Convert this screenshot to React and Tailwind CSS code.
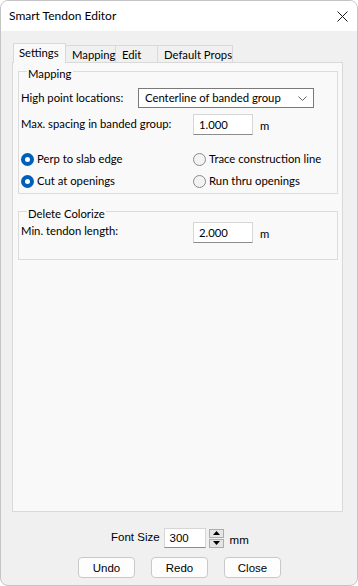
import React from 'react';

const font = { fontFamily: 'Lato, "Noto Sans", sans-serif' };
const smallFont = { fontFamily: '"Liberation Sans", Arial, sans-serif', fontSize: '11.5px' };

const Radio = ({ checked, label }) => (
  <div className="flex items-center h-[20px]">
    {checked ? (
      <span className="w-[13px] h-[13px] rounded-full bg-[#005fb8] flex items-center justify-center">
        <span className="w-[5px] h-[5px] rounded-full bg-white" />
      </span>
    ) : (
      <span className="w-[13px] h-[13px] rounded-full border border-[#8a8a8a] bg-[#f3f3f3]" />
    )}
    <span className="ml-[3px]">{label}</span>
  </div>
);

const TextBox = ({ value, className = '' }) => (
  <div
    className={`h-[21px] bg-white border border-[#d6d6d6] border-b-[#8c8c8c] flex items-center pl-[5px] ${className}`}
  >
    {value}
  </div>
);

const Tab = ({ label, width, selected }) =>
  selected ? (
    <div
      className="h-[20px] bg-[#f9f9f9] border border-b-0 border-[#d9d9d9] flex items-start pt-[1px] pl-[5px] relative z-10 -mb-px"
      style={{ width }}
    >
      {label}
    </div>
  ) : (
    <div
      className="h-[17px] self-end bg-[#f0f0f0] border-t border-r border-[#d9d9d9] flex items-center pl-[6px] pt-[1px]"
      style={{ width }}
    >
      {label}
    </div>
  );

export default function App() {
  return (
    <div
      className="w-[358px] h-[586px] flex flex-col border border-[#c4c4c4] rounded-[8px] overflow-hidden bg-[#f0f0f0] text-[11.3px] text-black leading-[16px] whitespace-nowrap"
      style={font}
    >
      <div className="h-[30px] bg-white flex items-center justify-between pl-[8px] pr-[9px]">
        <span className="text-[12px]">Smart Tendon Editor</span>
        <svg width="11" height="11" viewBox="0 0 11 11">
          <path d="M0.5 0.5 L10.5 10.5 M10.5 0.5 L0.5 10.5" stroke="#1a1a1a" strokeWidth="1" />
        </svg>
      </div>

      <div className="flex-1 flex flex-col pl-[11px]">
        <div className="flex mt-[12px] ml-[1px] h-[19px] items-end">
          <Tab label="Settings" width={53} selected />
          <Tab label="Mapping" width={50} />
          <Tab label="Edit" width={42} />
          <Tab label="Default Props" width={75} />
        </div>

        <div className="w-[331px] h-[450px] bg-[#f9f9f9] border border-[#d9d9d9] flex flex-col pl-[5px]">
          <fieldset className="w-[320px] mt-[-3px] border border-[#dcdcdc] px-[2px] pb-[2px]">
            <legend className="ml-[6px] px-[1px] pt-[6px] leading-[16px]">Mapping</legend>
            <div className="flex items-center h-[20px] mt-[6px]">
              <span className="w-[117px]">High point locations:</span>
              <div className="w-[176px] h-[20px] bg-white border border-[#7a7a7a] flex items-center justify-between pl-[6px] pr-[6px]">
                <span>Centerline of banded group</span>
                <svg width="9" height="5" viewBox="0 0 9 5">
                  <path d="M0.5 0.5 L4.5 4.5 L8.5 0.5" stroke="#606060" strokeWidth="1" fill="none" />
                </svg>
              </div>
            </div>
            <div className="flex items-center h-[21px] mt-[6px]">
              <span className="w-[172px] -mt-[2px]">Max. spacing in banded group:</span>
              <TextBox value="1.000" className="w-[60px]" />
              <span className="ml-[7px] mt-[3px]">m</span>
            </div>
            <div className="grid grid-cols-[172px_1fr] mt-[14px]">
              <Radio checked label="Perp to slab edge" />
              <Radio label="Trace construction line" />
            </div>
            <div className="grid grid-cols-[172px_1fr] mt-[2px]">
              <Radio checked label="Cut at openings" />
              <Radio label="Run thru openings" />
            </div>
          </fieldset>

          <fieldset className="w-[320px] mt-[6px] border border-[#dcdcdc] px-[2px] pb-[16px]">
            <legend className="ml-[6px] px-[1px] pt-[6px] leading-[16px]">Delete Colorize</legend>
            <div className="flex items-center h-[21px] mt-[0px]">
              <span className="w-[172px] -mt-[4px]">Min. tendon length:</span>
              <TextBox value="2.000" className="w-[60px]" />
              <span className="ml-[7px] mt-[3px]">m</span>
            </div>
          </fieldset>
        </div>

        <div className="flex items-center mt-[16px] h-[20px] pl-[99px]" style={smallFont}>
          <span className="mr-[4px] -mt-[3px]">Font Size</span>
          <div className="w-[42px] h-[20px] bg-white border border-[#d6d6d6] border-b-[#8c8c8c] flex items-center pl-[5px]">
            300
          </div>
          <div className="ml-[3px] flex flex-col gap-[1px]">
            <div className="w-[15px] h-[9px] bg-[#e5e5e5] border border-[#adadad] flex items-center justify-center">
              <svg width="7" height="4" viewBox="0 0 7 4">
                <path d="M0 4 L3.5 0 L7 4 Z" fill="#000" />
              </svg>
            </div>
            <div className="w-[15px] h-[9px] bg-[#e5e5e5] border border-[#adadad] flex items-center justify-center">
              <svg width="7" height="4" viewBox="0 0 7 4">
                <path d="M0 0 L7 0 L3.5 4 Z" fill="#000" />
              </svg>
            </div>
          </div>
          <span className="ml-[6px] mt-[3px]">mm</span>
        </div>

        <div className="flex mt-[9px] pl-[66px] gap-[16px]" style={smallFont}>
          {['Undo', 'Redo', 'Close'].map((b) => (
            <div
              key={b}
              className="w-[57px] h-[21px] bg-[#fdfdfd] border border-[#c8c8c8] rounded-[4px] flex items-center justify-center"
            >
              {b}
            </div>
          ))}
        </div>
      </div>
    </div>
  );
}
